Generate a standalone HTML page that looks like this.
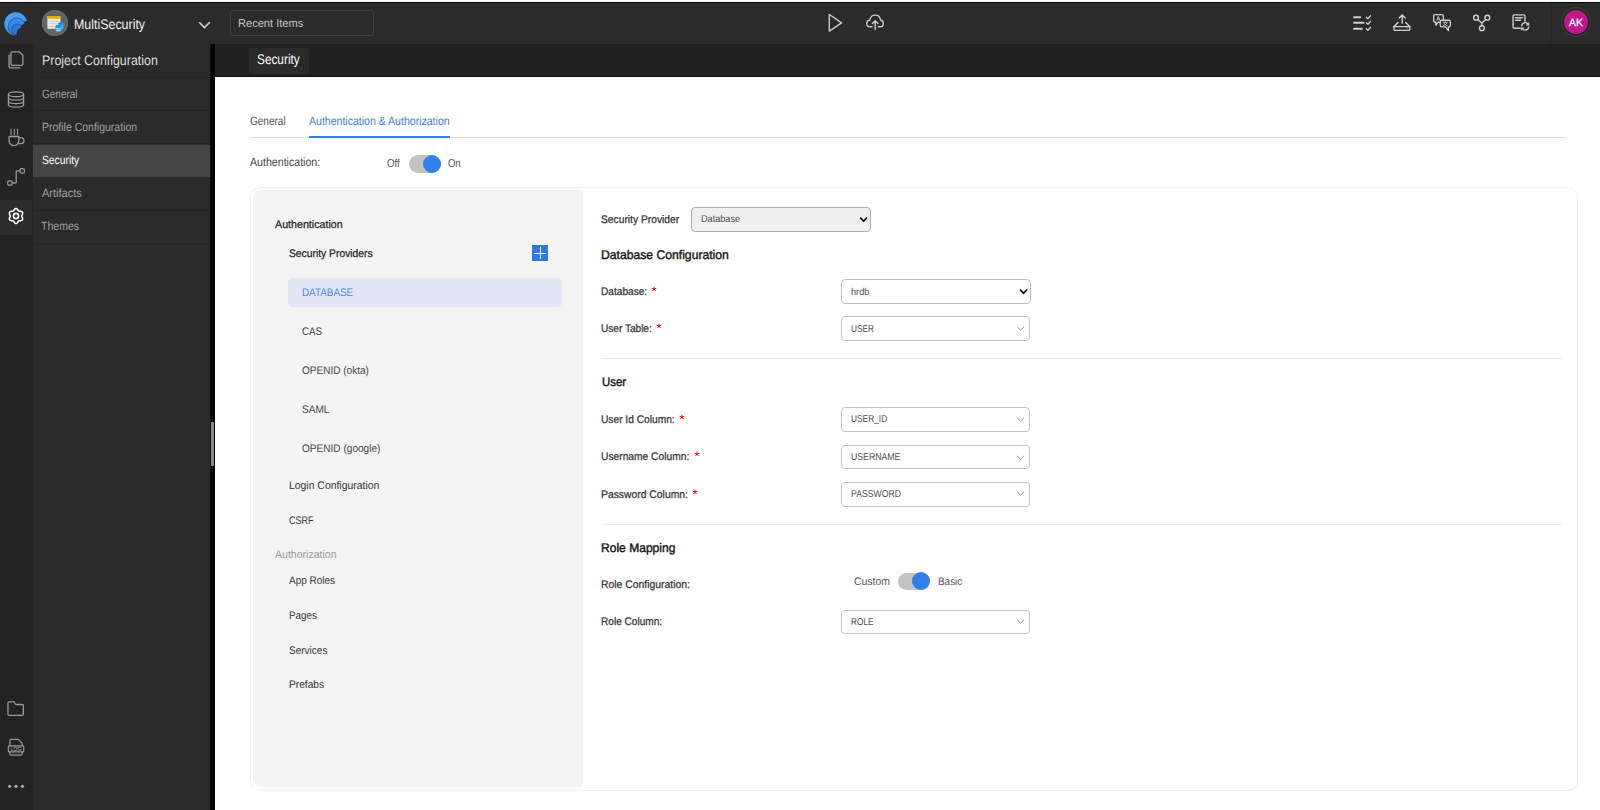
<!DOCTYPE html>
<html><head><meta charset="utf-8">
<style>
*{box-sizing:border-box;margin:0;padding:0}
html,body{width:1600px;height:810px;overflow:hidden;background:#fff;font-family:"Liberation Sans",sans-serif}
.a{position:absolute}
.t{position:absolute;white-space:nowrap;line-height:1;transform-origin:0 0;text-rendering:geometricPrecision}
svg{position:absolute;overflow:visible}
.sel{position:absolute;border:1px solid #c4c4c4;border-radius:4px;background:#fff}
.hr{position:absolute;height:1px;background:#ebebeb}
.row{position:absolute;left:33px;width:177px;height:1px;background:#242424}
</style></head><body>
<!-- frame -->
<div class="a" style="left:0;top:0;width:1600px;height:2px;background:#fafafa"></div>
<div class="a" style="left:0;top:2px;width:1600px;height:1px;background:#050505"></div>
<div class="a" style="left:0;top:3px;width:1600px;height:41px;background:#2b2b2b"></div>
<div class="a" style="left:0;top:44px;width:33px;height:766px;background:#232323"></div>
<div class="a" style="left:33px;top:44px;width:177px;height:766px;background:#2a2a2a"></div>
<div class="a" style="left:210px;top:44px;width:1px;height:766px;background:#111"></div>
<div class="a" style="left:211px;top:44px;width:4px;height:766px;background:#030303"></div>
<div class="a" style="left:211px;top:422px;width:2.5px;height:44px;background:#8a8a8a;border-radius:1px"></div>
<div class="a" style="left:215px;top:44px;width:1385px;height:32px;background:#212121"></div>
<div class="a" style="left:215px;top:76px;width:1385px;height:1px;background:#0a0a0a"></div>
<div class="a" style="left:249px;top:48px;width:60px;height:26px;background:#2a2a2a;border-radius:2px"></div>

<!-- sidebar rows -->
<div class="row" style="top:77px;background:#262626"></div>
<div class="row" style="top:110px"></div>
<div class="row" style="top:143px"></div>
<div class="a" style="left:33px;top:145px;width:177px;height:32px;background:#454545"></div>
<div class="row" style="top:210px"></div>
<div class="row" style="top:243px"></div>
<!-- active rail -->
<div class="a" style="left:0;top:200px;width:32px;height:35px;background:#2c2c2c"></div>

<!-- header boxes -->
<div class="a" style="left:230px;top:10px;width:144px;height:26px;border:1px solid #3f3f3f;border-radius:3px"></div>
<div class="a" style="left:1551px;top:3px;width:1px;height:41px;background:#262626"></div>
<div class="a" style="left:1560.8px;top:6.8px;width:30.6px;height:30.6px;border:1.5px solid #3c3c3c;border-radius:50%"></div>
<div class="a" style="left:1564.2px;top:10.1px;width:24px;height:24px;background:#c0198c;border-radius:50%;box-shadow:0 0 0 1px #172820"></div>
<div class="a" style="left:41.5px;top:10.3px;width:26px;height:26px;background:#646464;border-radius:50%;box-shadow:inset 0 0 0 1px #6c6c6c"></div>

<!-- logo -->
<svg style="left:4px;top:11.5px" width="23" height="24" viewBox="0 0 23 24">
<circle cx="11.8" cy="11.8" r="11.5" fill="#4a9bf2"/>
<circle cx="12.8" cy="14.7" r="8.7" fill="#3886ee" stroke="#1e3a5c" stroke-width="0.6"/>
<circle cx="13.3" cy="17.7" r="5.7" fill="#2f73e0" stroke="#1e3a5c" stroke-width="0.6"/>
<path d="M23.2,8.4 Q19.6,8.8 19.8,12.1 Q16.9,12.3 17.2,15.5 Q12.6,16.8 12.4,23.4 L12.4,25 L25,25 L25,8.4 Z" fill="#2b2b2b"/>
</svg>

<!-- project icon -->
<svg style="left:46.5px;top:16px" width="17" height="16" viewBox="0 0 17 16">
<rect x="0.4" y="0" width="13" height="12.8" rx="0.6" fill="#efefef"/>
<rect x="0.4" y="0" width="13" height="2.8" fill="#d6b700"/>
<rect x="1.5" y="4.8" width="9.5" height="0.7" fill="#b8b0a6"/>
<rect x="1.5" y="7.5" width="9.5" height="0.7" fill="#b8b0a6"/>
<rect x="1.5" y="10" width="9.5" height="0.7" fill="#b8b0a6"/>
<path d="M11.2,7.6 C11.2,6.8 12.4,6.3 13.8,6.3 C15.2,6.3 16.4,6.8 16.4,7.6 V12.6 C16.4,13.4 15.2,13.9 13.8,13.9 C12.4,13.9 11.2,13.4 11.2,12.6 Z" fill="#36b0f4"/>
<ellipse cx="13.8" cy="7.6" rx="2.6" ry="1.2" fill="#1d8ee6"/>
<path d="M8.6,10.3 C8.6,9.5 9.8,9 11.2,9 C12.6,9 13.8,9.5 13.8,10.3 V14.8 C13.8,15.6 12.6,16.1 11.2,16.1 C9.8,16.1 8.6,15.6 8.6,14.8 Z" fill="#40bbf8" stroke="#666" stroke-width="0.3"/>
<ellipse cx="11.2" cy="10.3" rx="2.6" ry="1.2" fill="#1d8ee6"/>
<path d="M8.8,12.4 C9.5,12.9 12.9,12.9 13.6,12.4 M8.8,14.1 C9.5,14.6 12.9,14.6 13.6,14.1" stroke="#c8ecff" stroke-width="0.6" fill="none"/>
</svg>

<!-- chevron header -->
<svg style="left:198px;top:21px" width="14" height="9" viewBox="0 0 14 9">
<path d="M1.2,1.2 L6.5,6.6 L11.8,1.2" fill="none" stroke="#d0d0d0" stroke-width="1.6"/>
</svg>

<!-- play & cloud -->
<svg style="left:826px;top:12px" width="20" height="22" viewBox="0 0 20 22">
<path d="M3.3,2.5 L15.6,10.8 L3.3,19.2 Z" fill="none" stroke="#c9c9c9" stroke-width="1.4" stroke-linejoin="round"/>
</svg>
<svg style="left:864px;top:12px" width="22" height="20" viewBox="0 0 22 20">
<path d="M8,14.7 H6 C4.1,14.7 2.7,13.3 2.7,11.4 C2.7,9.6 4,8.2 5.8,8.1 C6.3,5.1 8.5,3.1 11.2,3.1 C13.9,3.1 16.1,5.1 16.6,8 C18.2,8.3 19.3,9.7 19.3,11.4 C19.3,13.2 17.9,14.7 16.1,14.7 H14.4" fill="none" stroke="#c9c9c9" stroke-width="1.4" stroke-linecap="round"/>
<path d="M11.2,17.6 V8.9 M8.4,11.6 L11.2,8.7 L14,11.6" fill="none" stroke="#c9c9c9" stroke-width="1.4" stroke-linecap="round" stroke-linejoin="round"/>
</svg>

<!-- right header icons -->
<svg style="left:1350px;top:12px" width="24" height="22" viewBox="0 0 24 22">
<g stroke="#cfcfcf" stroke-width="1.9" stroke-linecap="round" fill="none">
<path d="M4,5.2 H10.2 M4,10.7 H13.6 M4,16.7 H12"/>
</g>
<g stroke="#cfcfcf" stroke-width="1.3" stroke-linecap="round" stroke-linejoin="round" fill="none">
<path d="M16.3,5.3 L17.9,6.8 L20.6,3.8 M16.3,10.8 L17.9,12.3 L20.6,9.3 M16.3,16.8 L17.9,18.3 L20.6,15.3"/>
</g>
</svg>
<svg style="left:1390px;top:12px" width="24" height="22" viewBox="0 0 24 22">
<g stroke="#cfcfcf" stroke-width="1.4" stroke-linecap="round" stroke-linejoin="round" fill="none">
<path d="M12.2,11.3 V3 M9.2,6 L12.2,2.9 L15.2,6"/>
<path d="M8,10.4 L4,14.6 V17.2 C4,17.9 4.5,18.4 5.2,18.4 H18.6 C19.3,18.4 19.8,17.9 19.8,17.2 V14.6 L15.6,10.4"/>
<path d="M4,14.6 H19.8"/>
</g>
<circle cx="17.2" cy="16.5" r="0.6" fill="#9a9a9a"/>
</svg>
<svg style="left:1430px;top:12px" width="24" height="22" viewBox="0 0 24 22">
<g stroke="#cfcfcf" stroke-width="1.3" stroke-linejoin="round" fill="none">
<path d="M5.1,2.65 H11.9 C12.7,2.65 13.35,3.3 13.35,4.1 V8.8 C13.35,9.6 12.7,10.25 11.9,10.25 H8 L5.9,13.4 V10.25 H5.1 C4.3,10.25 3.65,9.6 3.65,8.8 V4.1 C3.65,3.3 4.3,2.65 5.1,2.65 Z"/>
<path d="M11.7,8.25 H18.9 C19.7,8.25 20.35,8.9 20.35,9.7 V13.4 C20.35,14.2 19.7,14.85 18.9,14.85 H18.4 V18.6 L15.6,14.85 H11.7 C10.9,14.85 10.25,14.2 10.25,13.4 V9.7 C10.25,8.9 10.9,8.25 11.7,8.25 Z" fill="#2b2b2b"/>
</g>
<path d="M6.6,8.6 L8.3,4.4 L10,8.6 M7.2,7.2 H9.4" stroke="#cfcfcf" stroke-width="0.9" fill="none"/>
<path d="M12.8,10.3 H17.8 M15.3,9.5 V10.3 M13.6,10.6 C14.3,12.3 15.9,13.3 17.6,13.7 M17,10.6 C16.3,12.3 14.7,13.3 13,13.7" stroke="#cfcfcf" stroke-width="0.85" fill="none"/>
</svg>
<svg style="left:1470px;top:12px" width="24" height="22" viewBox="0 0 24 22">
<g stroke="#cfcfcf" stroke-width="1.4" fill="none">
<circle cx="6" cy="5.7" r="2.4"/><circle cx="17.4" cy="5.7" r="2.4"/><circle cx="11.9" cy="16.2" r="2.4"/>
<path d="M7.6,7.5 L11.9,11 L15.8,7.5 M11.9,11 V13.8"/>
</g>
</svg>
<svg style="left:1510px;top:12px" width="24" height="22" viewBox="0 0 24 22">
<g stroke="#cfcfcf" stroke-width="1.4" fill="none" stroke-linecap="round">
<path d="M10.3,16.2 H4.3 C3.6,16.2 3.1,15.7 3.1,15 V4.1 C3.1,3.4 3.6,2.9 4.3,2.9 H13.8 C14.5,2.9 15,3.4 15,4.1 V9.3"/>
<path d="M5.6,5.8 H12.3 M5.6,8.3 H10.5"/>
<path d="M11.6,13.8 C12,12.1 13.5,10.7 15.2,10.7 C16.6,10.7 17.8,11.5 18.4,12.6 M18.8,15.2 C18.4,16.9 16.9,18.2 15.2,18.2 C13.8,18.2 12.6,17.4 12,16.3" stroke-width="1.3"/>
<path d="M18.7,10.9 V12.9 H16.7 M11.7,18 V16 H13.7" stroke-width="1.1"/>
</g>
</svg>

<!-- left rail icons -->
<svg style="left:6px;top:49px" width="20" height="22" viewBox="0 0 20 22">
<g stroke="#9a9a9a" stroke-width="1.3" fill="none" stroke-linejoin="round">
<path d="M6.2,2.85 H13.1 L16.85,6.3 V15.1 C16.85,15.8 16.3,16.35 15.6,16.35 H6.2 C5.5,16.35 4.95,15.8 4.95,15.1 V4.1 C4.95,3.4 5.5,2.85 6.2,2.85 Z"/>
<path d="M3.05,5.4 V17.6 C3.05,18.3 3.6,18.85 4.3,18.85 H14.3"/>
</g>
</svg>
<svg style="left:6.3px;top:89.5px" width="20" height="20" viewBox="0 0 20 20">
<g stroke="#9a9a9a" stroke-width="1.3" fill="none">
<ellipse cx="10" cy="4.35" rx="7.6" ry="2.4"/>
<path d="M2.4,4.35 V14.8 C2.4,18 17.6,18 17.6,14.8 V4.35"/>
<path d="M2.4,7.8 C2.4,11 17.6,11 17.6,7.8"/>
<path d="M2.4,11.3 C2.4,14.5 17.6,14.5 17.6,11.3"/>
</g>
</svg>
<svg style="left:6px;top:128px" width="21" height="20" viewBox="0 0 21 20">
<g stroke="#9a9a9a" stroke-width="1.3" fill="none" stroke-linecap="round" stroke-linejoin="round">
<path d="M3.1,8.5 H12.8 V12.5 C12.8,15.4 10.6,17.7 7.95,17.7 C5.3,17.7 3.1,15.4 3.1,12.5 Z"/>
<path d="M12.8,9.6 H15 C16.7,9.6 18,10.9 18,12.6 C18,14.3 16.7,15.6 15,15.6 H12.3"/>
<path d="M5.1,1.2 C4.199999999999999,2.2 6.0,3.2 5.1,4.2 C4.199999999999999,5.2 5.8,6 5.1,6.9 M8.4,1.2 C7.5,2.2 9.3,3.2 8.4,4.2 C7.5,5.2 9.1,6 8.4,6.9 M11.6,1.2 C10.7,2.2 12.5,3.2 11.6,4.2 C10.7,5.2 12.299999999999999,6 11.6,6.9" stroke-width="1.1"/>
</g>
</svg>
<svg style="left:5px;top:166px" width="22" height="22" viewBox="0 0 22 22">
<g stroke="#9a9a9a" stroke-width="1.3" fill="none" stroke-linejoin="round">
<rect x="2.75" y="14.8" width="4.4" height="4.4" rx="1.25"/>
<rect x="15" y="2.7" width="4.4" height="4.4" rx="1.25"/>
<path d="M7.15,17 H10.5 C10.9,17 11.2,16.7 11.2,16.3 V5.6 C11.2,5.2 11.5,4.9 11.9,4.9 H15"/>
</g>
</svg>
<svg style="left:5.1px;top:205px" width="22" height="22" viewBox="0 0 22 22"><path fill="none" stroke="#ffffff" stroke-width="1.6" stroke-linejoin="round" d="M16.75,11.00 L16.80,11.38 L16.95,11.78 L17.15,12.22 L17.38,12.71 L17.56,13.23 L17.65,13.76 L17.62,14.27 L17.45,14.72 L17.14,15.10 L16.71,15.38 L16.21,15.57 L15.67,15.67 L15.14,15.72 L14.65,15.76 L14.23,15.83 L13.88,15.98 L13.57,16.22 L13.30,16.54 L13.02,16.94 L12.71,17.38 L12.35,17.79 L11.94,18.14 L11.48,18.37 L11.00,18.45 L10.52,18.37 L10.06,18.14 L9.65,17.79 L9.29,17.38 L8.98,16.94 L8.70,16.54 L8.43,16.22 L8.13,15.98 L7.77,15.83 L7.35,15.76 L6.86,15.72 L6.33,15.67 L5.79,15.57 L5.29,15.38 L4.86,15.10 L4.55,14.72 L4.38,14.27 L4.35,13.76 L4.44,13.23 L4.62,12.71 L4.85,12.22 L5.05,11.78 L5.20,11.38 L5.25,11.00 L5.20,10.62 L5.05,10.22 L4.85,9.78 L4.62,9.29 L4.44,8.77 L4.35,8.24 L4.38,7.73 L4.55,7.28 L4.86,6.90 L5.29,6.62 L5.79,6.43 L6.33,6.33 L6.86,6.28 L7.35,6.24 L7.77,6.17 L8.12,6.02 L8.43,5.78 L8.70,5.46 L8.98,5.06 L9.29,4.62 L9.65,4.21 L10.06,3.86 L10.52,3.63 L11.00,3.55 L11.48,3.63 L11.94,3.86 L12.35,4.21 L12.71,4.62 L13.02,5.06 L13.30,5.46 L13.57,5.78 L13.88,6.02 L14.23,6.17 L14.65,6.24 L15.14,6.28 L15.67,6.33 L16.21,6.43 L16.71,6.62 L17.14,6.90 L17.45,7.27 L17.62,7.73 L17.65,8.24 L17.56,8.77 L17.38,9.29 L17.15,9.78 L16.95,10.22 L16.80,10.62 Z"/><circle cx="11" cy="11" r="2.6" fill="none" stroke="#ffffff" stroke-width="1.6"/></svg>
<svg style="left:5px;top:698px" width="22" height="20" viewBox="0 0 22 20">
<path fill="none" stroke="#9a9a9a" stroke-width="1.3" stroke-linejoin="round" d="M3.95,3.95 H9 L10.6,6.5 H17.2 C17.8,6.5 18.35,7 18.35,7.6 V16.2 C18.35,16.8 17.8,17.35 17.2,17.35 H4.1 C3.5,17.35 2.95,16.8 2.95,16.2 V5 C2.95,4.4 3.4,3.95 3.95,3.95 Z"/>
</svg>
<svg style="left:5px;top:736px" width="22" height="22" viewBox="0 0 22 22">
<g fill="none" stroke="#9a9a9a" stroke-width="1.2" stroke-linejoin="round">
<path d="M4.9,9.9 V4.4 C4.9,3.8 5.4,3.35 6,3.35 H13.4 L17.1,7.2 V9.9"/>
<path d="M4.9,15.9 V18.1 C4.9,18.7 5.4,19.15 6,19.15 H16 C16.6,19.15 17.1,18.7 17.1,18.1 V15.9"/>
<rect x="3.35" y="9.9" width="15.4" height="6" rx="1"/>
</g>
<text x="11.05" y="15" font-family="Liberation Sans" font-size="6" text-anchor="middle" fill="#b4b4b4" textLength="10.4" lengthAdjust="spacingAndGlyphs" style="text-rendering:geometricPrecision">LOG</text>
</svg>
<svg style="left:6px;top:782px" width="20" height="8" viewBox="0 0 20 8">
<g fill="#a8a8a8"><circle cx="3.6" cy="4.3" r="1.6"/><circle cx="10" cy="4.3" r="1.6"/><circle cx="16.5" cy="4.3" r="1.6"/></g>
</svg>

<!-- tabs -->
<div class="hr" style="left:249.5px;top:137px;width:1316px;background:#dcdcdc"></div>
<div class="a" style="left:308.8px;top:136px;width:141.5px;height:2.2px;background:#3b7de6"></div>
<!-- auth toggle -->
<div class="a" style="left:409.2px;top:155.2px;width:31.6px;height:17.8px;background:#c3c3c3;border-radius:9px"></div>
<div class="a" style="left:422.9px;top:155.1px;width:18px;height:18px;background:#3280ec;border-radius:50%"></div>

<!-- card -->
<div class="a" style="left:249.5px;top:186.5px;width:1328.5px;height:604px;border:1.2px solid #efefef;border-radius:10px"></div>
<div class="a" style="left:253px;top:190px;width:330px;height:597px;background:#f4f4f4;border-radius:8px 0 0 8px"></div>

<!-- plus button -->
<div class="a" style="left:532px;top:245.4px;width:16px;height:15.2px;background:#2f7be6"></div>
<div class="a" style="left:534px;top:252.6px;width:12px;height:1px;background:#fff"></div>
<div class="a" style="left:539.6px;top:247.4px;width:1px;height:11.5px;background:#fff"></div>
<!-- database highlight -->
<div class="a" style="left:288px;top:277.6px;width:273.6px;height:29.8px;background:#e2e7f3;border-radius:5px"></div>

<!-- right panel -->
<div class="sel" style="left:691px;top:207px;width:180px;height:25px;background:#f0f0f0;border-color:#a9a9a9;border-radius:4px"></div>
<svg style="left:858px;top:214px" width="12" height="10" viewBox="0 0 12 10"><path d="M2.2,3.6 L5.6,7 L9,3.6" fill="none" stroke="#111" stroke-width="1.7"/></svg>

<div class="sel" style="left:841px;top:279px;width:190px;height:25px;border-color:#bdbdbd"></div>
<svg style="left:1017px;top:286px" width="12" height="10" viewBox="0 0 12 10"><path d="M2.8,3.5 L6.5,7.2 L10.2,3.5" fill="none" stroke="#111" stroke-width="1.7"/></svg>

<div class="sel" style="left:841px;top:316px;width:189px;height:25px"></div>
<svg style="left:1015px;top:324px" width="12" height="10" viewBox="0 0 12 10"><path d="M2.2,2.8 L5.6,6.2 L9,2.8" fill="none" stroke="#9a9a9a" stroke-width="1"/></svg>

<div class="hr" style="left:601px;top:358px;width:961px"></div>

<div class="sel" style="left:841px;top:407px;width:189px;height:25px"></div>
<svg style="left:1015px;top:415px" width="12" height="10" viewBox="0 0 12 10"><path d="M2.2,2.8 L5.6,6.2 L9,2.8" fill="none" stroke="#9a9a9a" stroke-width="1"/></svg>
<div class="sel" style="left:841px;top:445px;width:189px;height:24px"></div>
<svg style="left:1015px;top:452.5px" width="12" height="10" viewBox="0 0 12 10"><path d="M2.2,2.8 L5.6,6.2 L9,2.8" fill="none" stroke="#9a9a9a" stroke-width="1"/></svg>
<div class="sel" style="left:841px;top:482px;width:189px;height:25px"></div>
<svg style="left:1015px;top:489px" width="12" height="10" viewBox="0 0 12 10"><path d="M2.2,2.8 L5.6,6.2 L9,2.8" fill="none" stroke="#9a9a9a" stroke-width="1"/></svg>

<div class="hr" style="left:601px;top:524px;width:961px"></div>

<div class="a" style="left:898px;top:572.5px;width:31.7px;height:17.7px;background:#c3c3c3;border-radius:9px"></div>
<div class="a" style="left:911.5px;top:572.4px;width:18px;height:18px;background:#3280ec;border-radius:50%"></div>

<div class="sel" style="left:841px;top:610px;width:189px;height:24px"></div>
<svg style="left:1015px;top:617px" width="12" height="10" viewBox="0 0 12 10"><path d="M2.2,2.8 L5.6,6.2 L9,2.8" fill="none" stroke="#9a9a9a" stroke-width="1"/></svg>

<!-- asterisks -->
<svg style="left:651.4px;top:286.2px" width="6" height="6" viewBox="-3 -3 6 6"><g stroke="#f01010" stroke-width="0.95" stroke-linecap="round"><path d="M0,-2.1 V0.1 M0,0 L2,-0.65 M0,0 L-2,-0.65 M0,0 L1.25,1.7 M0,0 L-1.25,1.7"/></g></svg>
<svg style="left:656.1px;top:323.2px" width="6" height="6" viewBox="-3 -3 6 6"><g stroke="#f01010" stroke-width="0.95" stroke-linecap="round"><path d="M0,-2.1 V0.1 M0,0 L2,-0.65 M0,0 L-2,-0.65 M0,0 L1.25,1.7 M0,0 L-1.25,1.7"/></g></svg>
<svg style="left:678.7px;top:414.4px" width="6" height="6" viewBox="-3 -3 6 6"><g stroke="#f01010" stroke-width="0.95" stroke-linecap="round"><path d="M0,-2.1 V0.1 M0,0 L2,-0.65 M0,0 L-2,-0.65 M0,0 L1.25,1.7 M0,0 L-1.25,1.7"/></g></svg>
<svg style="left:693.5px;top:451.4px" width="6" height="6" viewBox="-3 -3 6 6"><g stroke="#f01010" stroke-width="0.95" stroke-linecap="round"><path d="M0,-2.1 V0.1 M0,0 L2,-0.65 M0,0 L-2,-0.65 M0,0 L1.25,1.7 M0,0 L-1.25,1.7"/></g></svg>
<svg style="left:691.6px;top:489.2px" width="6" height="6" viewBox="-3 -3 6 6"><g stroke="#f01010" stroke-width="0.95" stroke-linecap="round"><path d="M0,-2.1 V0.1 M0,0 L2,-0.65 M0,0 L-2,-0.65 M0,0 L1.25,1.7 M0,0 L-1.25,1.7"/></g></svg>
<div class="t" style="left:73.91px;top:17.00px;font-size:14px;color:#f2f2f2;transform:scaleX(0.8871)">MultiSecurity</div>
<div class="t" style="left:237.50px;top:19.00px;font-size:11.5px;color:#c4c4c4;transform:scaleX(0.9633)">Recent Items</div>
<div class="t" style="left:1568.80px;top:18.00px;font-size:10.5px;color:#ffffff;transform:scaleX(0.9926);-webkit-text-stroke:0.25px #ffffff">AK</div>
<div class="t" style="left:42.21px;top:53.00px;font-size:14px;color:#dedede;transform:scaleX(0.8856)">Project Configuration</div>
<div class="t" style="left:41.80px;top:88.00px;font-size:12px;color:#a2a2a2;transform:scaleX(0.8328)">General</div>
<div class="t" style="left:41.80px;top:121.00px;font-size:12px;color:#a2a2a2;transform:scaleX(0.8746)">Profile Configuration</div>
<div class="t" style="left:41.80px;top:154.00px;font-size:12px;color:#ffffff;transform:scaleX(0.8582)">Security</div>
<div class="t" style="left:41.80px;top:187.00px;font-size:12px;color:#a2a2a2;transform:scaleX(0.9160)">Artifacts</div>
<div class="t" style="left:41.00px;top:220.00px;font-size:12px;color:#a0a0a0;transform:scaleX(0.8766)">Themes</div>
<div class="t" style="left:257.30px;top:52.00px;font-size:14px;color:#ffffff;transform:scaleX(0.8443)">Security</div>
<div class="t" style="left:249.60px;top:115.00px;font-size:12px;color:#555555;transform:scaleX(0.8352)">General</div>
<div class="t" style="left:308.80px;top:115.00px;font-size:12px;color:#3b7de6;transform:scaleX(0.8782)">Authentication &amp; Authorization</div>
<div class="t" style="left:249.60px;top:156.00px;font-size:12px;color:#444444;transform:scaleX(0.8842)">Authentication:</div>
<div class="t" style="left:387.20px;top:159.00px;font-size:11.5px;color:#555555;transform:scaleX(0.8473)">Off</div>
<div class="t" style="left:447.80px;top:159.00px;font-size:11.5px;color:#555555;transform:scaleX(0.8230)">On</div>
<div class="t" style="left:275.00px;top:220.00px;font-size:11px;color:#1e1e1e;transform:scaleX(0.9713);-webkit-text-stroke:0.25px #1e1e1e">Authentication</div>
<div class="t" style="left:288.90px;top:249.00px;font-size:11px;color:#1e1e1e;transform:scaleX(0.9370);-webkit-text-stroke:0.25px #1e1e1e">Security Providers</div>
<div class="t" style="left:301.60px;top:288.00px;font-size:11px;color:#4a86ea;transform:scaleX(0.8957)">DATABASE</div>
<div class="t" style="left:301.60px;top:327.00px;font-size:11px;color:#444444;transform:scaleX(0.8887)">CAS</div>
<div class="t" style="left:301.70px;top:366.00px;font-size:11px;color:#444444;transform:scaleX(0.9122)">OPENID (okta)</div>
<div class="t" style="left:301.70px;top:405.00px;font-size:11px;color:#444444;transform:scaleX(0.9150)">SAML</div>
<div class="t" style="left:301.70px;top:444.00px;font-size:11px;color:#444444;transform:scaleX(0.9161)">OPENID (google)</div>
<div class="t" style="left:288.80px;top:481.00px;font-size:11px;color:#333333;transform:scaleX(0.9466)">Login Configuration</div>
<div class="t" style="left:288.80px;top:516.00px;font-size:11px;color:#333333;transform:scaleX(0.8172)">CSRF</div>
<div class="t" style="left:275.00px;top:550.00px;font-size:11px;color:#999999;transform:scaleX(0.9581)">Authorization</div>
<div class="t" style="left:288.80px;top:576.00px;font-size:11px;color:#333333;transform:scaleX(0.9073)">App Roles</div>
<div class="t" style="left:288.70px;top:611.00px;font-size:11px;color:#333333;transform:scaleX(0.8962)">Pages</div>
<div class="t" style="left:288.70px;top:646.00px;font-size:11px;color:#333333;transform:scaleX(0.9115)">Services</div>
<div class="t" style="left:288.70px;top:680.00px;font-size:11px;color:#333333;transform:scaleX(0.9269)">Prefabs</div>
<div class="t" style="left:601.20px;top:215.00px;font-size:11px;color:#333333;transform:scaleX(0.9335);-webkit-text-stroke:0.25px #333333">Security Provider</div>
<div class="t" style="left:701.00px;top:215.00px;font-size:10px;color:#4a4a4a;transform:scaleX(0.9111)">Database</div>
<div class="t" style="left:600.83px;top:249.00px;font-size:12.5px;color:#141414;transform:scaleX(0.9733);-webkit-text-stroke:0.4px #141414">Database Configuration</div>
<div class="t" style="left:601.20px;top:287.00px;font-size:11px;color:#333333;transform:scaleX(0.9204);-webkit-text-stroke:0.25px #333333">Database:</div>
<div class="t" style="left:601.20px;top:324.00px;font-size:11px;color:#333333;transform:scaleX(0.9158);-webkit-text-stroke:0.25px #333333">User Table:</div>
<div class="t" style="left:850.70px;top:288.00px;font-size:10px;color:#4a4a4a;transform:scaleX(0.9143)">hrdb</div>
<div class="t" style="left:850.70px;top:325.00px;font-size:10px;color:#4a4a4a;transform:scaleX(0.8309)">USER</div>
<div class="t" style="left:601.60px;top:376.00px;font-size:12.5px;color:#141414;transform:scaleX(0.9150);-webkit-text-stroke:0.4px #141414">User</div>
<div class="t" style="left:601.10px;top:415.00px;font-size:11px;color:#333333;transform:scaleX(0.9268);-webkit-text-stroke:0.25px #333333">User Id Column:</div>
<div class="t" style="left:601.10px;top:452.00px;font-size:11px;color:#333333;transform:scaleX(0.9314);-webkit-text-stroke:0.25px #333333">Username Column:</div>
<div class="t" style="left:601.10px;top:490.00px;font-size:11px;color:#333333;transform:scaleX(0.9419);-webkit-text-stroke:0.25px #333333">Password Column:</div>
<div class="t" style="left:850.70px;top:415.00px;font-size:10px;color:#4a4a4a;transform:scaleX(0.8348)">USER_ID</div>
<div class="t" style="left:850.70px;top:453.00px;font-size:10px;color:#4a4a4a;transform:scaleX(0.8719)">USERNAME</div>
<div class="t" style="left:850.70px;top:490.00px;font-size:10px;color:#4a4a4a;transform:scaleX(0.8662)">PASSWORD</div>
<div class="t" style="left:600.74px;top:542.00px;font-size:12.5px;color:#141414;transform:scaleX(0.9648);-webkit-text-stroke:0.4px #141414">Role Mapping</div>
<div class="t" style="left:601.10px;top:580.00px;font-size:11px;color:#333333;transform:scaleX(0.9446);-webkit-text-stroke:0.25px #333333">Role Configuration:</div>
<div class="t" style="left:601.10px;top:617.00px;font-size:11px;color:#333333;transform:scaleX(0.9177);-webkit-text-stroke:0.25px #333333">Role Column:</div>
<div class="t" style="left:854.30px;top:577.00px;font-size:11px;color:#555555;transform:scaleX(0.9487)">Custom</div>
<div class="t" style="left:937.60px;top:577.00px;font-size:11px;color:#555555;transform:scaleX(0.9015)">Basic</div>
<div class="t" style="left:850.70px;top:618.00px;font-size:10px;color:#4a4a4a;transform:scaleX(0.8309)">ROLE</div>
</body></html>
